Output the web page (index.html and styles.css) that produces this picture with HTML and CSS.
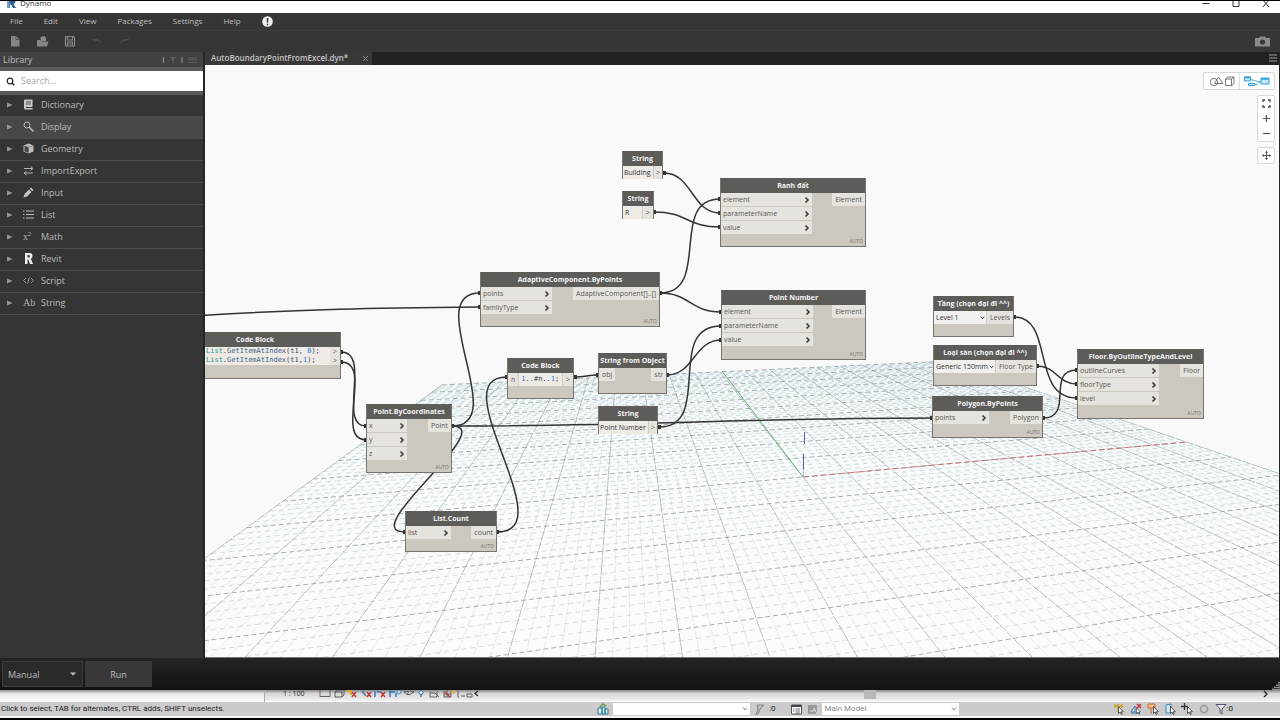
FILE: index.html
```html
<!DOCTYPE html>
<html lang="en">
<head>
<meta charset="utf-8">
<meta name="viewport" content="width=device-width, initial-scale=1">
<title>Dynamo</title>
<link rel="stylesheet" href="styles.css">
</head>
<body>
<svg class="defs" aria-hidden="true">
  <symbol id="chev" viewBox="0 0 6 8"><path d="M1.500 1.500L4 4 1.500 6.500" fill="none" stroke="#3c3b39" stroke-width="1.600"/></symbol>
  <symbol id="tri" viewBox="0 0 6 6"><path d="M0 0.5L5.500 3 0 5.500z" fill="#969696"/></symbol>
  <symbol id="down" viewBox="0 0 6 4"><path d="M1 .5l2 2.500L5 .5" fill="none" stroke="currentColor" stroke-width="1"/></symbol>
  <symbol id="cursor" viewBox="0 0 6 9"><path d="M.5.5v7l1.700-1.500L3.300 8.500l1-.5-1-2.300h2z" fill="#fff" stroke="#333" stroke-width=".8"/></symbol>
</svg>
<div class="app">
  <header class="titlebar">
    <div class="brand">
      <svg width="10" height="9" viewBox="0 0 10 9"><path d="M1 0h5.500q3 0 3 2.500Q9.500 4.300 7.500 5L10 9H7L5 5.500H4V9H1z" fill="#2c5f95"/><path d="M1 0h2.500v9H1z" fill="#6fa3d0"/></svg>
      <span>Dynamo</span>
    </div>
    <div class="winctl">
      <button aria-label="Minimize"><svg width="8" height="8" viewBox="0 0 8 8"><path d="M.5 3.500h7" stroke="#333" fill="none"/></svg></button>
      <button aria-label="Maximize"><svg width="8" height="8" viewBox="0 0 8 8"><path d="M1 0v6.500h6V0" stroke="#333" fill="none"/></svg></button>
      <button aria-label="Close"><svg width="8" height="8" viewBox="0 0 8 8"><path d="M1 7l6-7M7 7L1 0" stroke="#333" fill="none"/></svg></button>
    </div>
  </header>
  <nav class="menu">
    <button>File</button><button>Edit</button><button>View</button><button>Packages</button><button>Settings</button><button>Help</button>
    <button aria-label="Notifications"><svg width="11" height="11" viewBox="0 0 11 11"><circle cx="5.500" cy="5.500" r="5.300" fill="#eee"/><path d="M5.500 2v4.500M5.500 7.700v1.500" stroke="#333" stroke-width="1.500"/></svg></button>
  </nav>
  <div class="toolbar">
    <button aria-label="New"><svg width="12" height="12" viewBox="0 0 12 12"><path d="M2 1h5l3.500 3.500V11.500H2z" fill="#858585"/><path d="M7 1v3.500h3.500" fill="none" stroke="#444" stroke-width=".7"/></svg></button>
    <button aria-label="Open"><svg width="13" height="12" viewBox="0 0 13 12"><path d="M4.500 3V2l4-1 1.500 2v3h-5z" fill="#8a8a8a"/><path d="M1 11.500V5h3.500l1 1.500h7L11 11.500z" fill="#858585"/></svg></button>
    <button aria-label="Save"><svg width="12" height="12" viewBox="0 0 12 12"><path d="M1.500 1.500h8l1 1v8.500h-9zM3.500 1.500v3.500h5V1.500M3.500 11V7h5v4M4.500 9h3" fill="none" stroke="#858585" stroke-width="1.200"/></svg></button>
    <button aria-label="Undo"><svg width="12" height="12" viewBox="0 0 12 12"><path d="M1 4l1-2v2q6-1 9 5-4-4-8-3l1 1z" fill="#4c4c4c"/></svg></button>
    <button aria-label="Redo"><svg width="12" height="12" viewBox="0 0 12 12"><path d="M11 4l-1-2v2q-6-1-9 5 4-4 8-3l-1 1z" fill="#4c4c4c"/></svg></button>
    <button class="camera" aria-label="Export image"><svg width="15" height="11" viewBox="0 0 15 11"><path d="M0 2h4l1-1.500h5L11 2h4v8.500H0z" fill="#8a8a8a"/><circle cx="7.500" cy="6" r="2.600" fill="#383838"/></svg></button>
  </div>

  <main class="main">
    <aside class="library">
      <div class="libhead">
        <h2>Library</h2>
        <svg width="36" height="8" viewBox="0 0 36 8"><path d="M1.500 1v6M20 1v6" stroke="#8a8a8a" stroke-width="1.200"/><path d="M8 1.500h6M11 1.500v6M9.500 3h3" stroke="#666" fill="none"/><path d="M26 2h9M26 4h9M26 6.500h9" stroke="#5c5c5c" fill="none"/></svg>
      </div>
      <label class="search">
        <svg width="9" height="9" viewBox="0 0 9 9"><circle cx="4" cy="4" r="2.800" fill="none" stroke="#222" stroke-width="1.200"/><path d="M6 6l2.300 2.300" stroke="#222" stroke-width="1.500"/></svg>
        <input type="text" placeholder="Search..." aria-label="Search">
      </label>
      <div class="tree">
        <button><svg class="t"><use href="#tri"/></svg><svg class="i" viewBox="0 0 11 11"><path d="M2 .5h7.500V8H3v1h6.500v1.500H2.500Q1 10.500 1 9V1.500Q1 .5 2 .5z" fill="#c8c8c8"/><path d="M3 3h5M3 5h5" stroke="#444" stroke-width=".9"/></svg>Dictionary</button>
        <button class="on"><svg class="t"><use href="#tri"/></svg><svg class="i" viewBox="0 0 11 11"><circle cx="4" cy="4" r="3" fill="none" stroke="#b4b4b4"/><path d="M6 6l4.500 4.500" stroke="#b4b4b4" stroke-width="1.600"/></svg>Display</button>
        <button><svg class="t"><use href="#tri"/></svg><svg class="i" viewBox="0 0 11 11"><path d="M.5 2.500L5.500.5l5 2v6l-5 2-5-2z" fill="#bdbdbd"/><path d="M1.500 3l4 1.200v5.500l-4-1.500z" fill="#444"/><path d="M.5 2.500l5 1.700 5-1.700M5.500 4v6.500" stroke="#666" fill="none" stroke-width=".6"/></svg>Geometry</button>
        <button><svg class="t"><use href="#tri"/></svg><svg class="i" viewBox="0 0 11 11"><path d="M1 3.500h8M7.500 1.500l2.500 2-2.500 2M10 8H2M3.500 6L1 8l2.500 2" fill="none" stroke="#b4b4b4"/></svg>ImportExport</button>
        <button><svg class="t"><use href="#tri"/></svg><svg class="i" viewBox="0 0 11 11"><path d="M.5 10.500l1-3.500 4.500-4.500 2.500 2.500L4 9.500zM6.700 1.800L8 .5 10.500 3 9.200 4.300z" fill="#c4c4c4"/></svg>Input</button>
        <button><svg class="t"><use href="#tri"/></svg><svg class="i" viewBox="0 0 11 11"><path d="M3 2h8M3 5.500h8M3 9h8M0 2h1.500M0 5.500h1.500M0 9h1.500" stroke="#bbb" stroke-width="1.200"/></svg>List</button>
        <button><svg class="t"><use href="#tri"/></svg><span class="i math">x<sup>2</sup></span>Math</button>
        <button><svg class="t"><use href="#tri"/></svg><svg class="i" viewBox="0 0 11 11"><path d="M2 0h4.500Q9.500 0 9.500 3 9.500 5 7.800 5.800L10 11H7L5.300 6.500H4.500V11H2zM4.500 2v2.500h1Q7 4.500 7 3.200 7 2 5.500 2z" fill="#eee" fill-rule="evenodd"/></svg>Revit</button>
        <button><svg class="t"><use href="#tri"/></svg><svg class="i" viewBox="0 0 11 11"><path d="M3 3L.5 5.500 3 8M8 3l2.500 2.500L8 8M6.500 2.500l-2 6" fill="none" stroke="#a4a4a4" stroke-width=".9"/></svg>Script</button>
        <button><svg class="t"><use href="#tri"/></svg><span class="i ab">Ab</span>String</button>
      </div>
    </aside>

    <section class="work">
      <div class="tabs">
        <div class="tab"><span>AutoBoundaryPointFromExcel.dyn*</span><button aria-label="Close tab"><svg width="7" height="7" viewBox="0 0 7 7"><path d="M1 1l5 5M6 1L1 6" stroke="#8c8c8c"/></svg></button></div>
        <button class="tabmenu" aria-label="Tabs"><svg width="8" height="8" viewBox="0 0 8 8"><path d="M0 1h8M0 4h8M0 7h8" stroke="#a0a0a0" stroke-width="1.200"/></svg></button>
      </div>
      <div class="canvas">
        <svg class="layer" width="1075" height="593" viewBox="205 65 1075 593">
          <g id="grid"></g>
          <path d="M803 477L722 371" stroke="#6fae73" fill="none"/>
          <path d="M803 477L1187 442" stroke="#cc7078" stroke-dasharray="6 3" fill="none"/>
          <path d="M804.500 432v12M803.500 454v15" stroke="#5a5fae" fill="none"/><path d="M803.500 469v8" stroke="#b9bce4" fill="none"/>
          <g class="wires">
            <path d="M195 316C300 309 380 308 480 307"/>
            <path d="M660 293C712 293 668 199 720 199"/>
            <path d="M660 293C690 293 690 312 721 312"/>
            <path d="M664 173C692 173 692 213 720 213"/>
            <path d="M654 212C687 212 687 227 720 227"/>
            <path d="M452 426C512 426 420 293 480 293"/>
            <path d="M452 426C500 426 355 532 405 532"/>
            <path d="M452 426C650 426 740 418 932 418"/>
            <path d="M497 532C565 532 440 377 507 377"/>
            <path d="M575 377C583 377 590 375 598 375"/>
            <path d="M667 375C694 375 694 340 721 340"/>
            <path d="M659 427C714 427 664 326 721 326"/>
            <path d="M341 352C372 352 337 426 366 426"/>
            <path d="M341 362C374 362 334 440 366 440"/>
            <path d="M1014 317C1055 317 1030 398 1077 398"/>
            <path d="M1037 366C1057 366 1057 384 1077 384"/>
            <path d="M1043 418C1075 418 1045 370 1077 370"/>
          </g>
          <g id="pins"></g>
        </svg>

        <article class="node n-list"><h3>Code Block</h3>
          <div class="ports"><div class="code"><p><b>List</b>.<i>GetItemAtIndex</i>(t1, <em>0</em>);</p><p><b>List</b>.<i>GetItemAtIndex</i>(t1,<em>1</em>);</p></div><div class="outs slim"><span>&gt;</span><span>&gt;</span></div></div></article>

        <article class="node n-coord"><h3>Point.ByCoordinates</h3>
          <div class="ports"><div class="ins"><span>x<svg><use href="#chev"/></svg></span><span>y<svg><use href="#chev"/></svg></span><span>z<svg><use href="#chev"/></svg></span></div><div class="outs"><span>Point</span></div></div><footer>AUTO</footer></article>

        <article class="node n-count"><h3>List.Count</h3>
          <div class="ports"><div class="ins"><span>list<svg><use href="#chev"/></svg></span></div><div class="outs"><span>count</span></div></div><footer>AUTO</footer></article>

        <article class="node n-adapt"><h3>AdaptiveComponent.ByPoints</h3>
          <div class="ports"><div class="ins"><span>points<svg><use href="#chev"/></svg></span><span>familyType<svg><use href="#chev"/></svg></span></div><div class="outs"><span>AdaptiveComponent[]..[]</span></div></div><footer>AUTO</footer></article>

        <article class="node n-range"><h3>Code Block</h3>
          <div class="ports"><div class="outs"><span>n</span></div><div class="code one"><p><em>1</em>..#n..<em>1</em>;</p></div><div class="outs"><span>&gt;</span></div></div></article>

        <article class="node n-sfo"><h3>String from Object</h3>
          <div class="ports"><div class="outs"><span>obj</span></div><div class="outs"><span>str</span></div></div></article>

        <article class="node n-s3"><h3>String</h3><div class="ports"><input type="text" value="Point Number" aria-label="String value"><div class="outs"><span>&gt;</span></div></div></article>
        <article class="node n-s1"><h3>String</h3><div class="ports"><input type="text" value="Building" aria-label="String value"><div class="outs"><span>&gt;</span></div></div></article>
        <article class="node n-s2"><h3>String</h3><div class="ports"><input type="text" value="R" aria-label="String value"><div class="outs"><span>&gt;</span></div></div></article>

        <article class="node n-ranh"><h3>Ranh đất</h3>
          <div class="ports"><div class="ins"><span>element<svg><use href="#chev"/></svg></span><span>parameterName<svg><use href="#chev"/></svg></span><span>value<svg><use href="#chev"/></svg></span></div><div class="outs"><span>Element</span></div></div><footer>AUTO</footer></article>

        <article class="node n-num"><h3>Point Number</h3>
          <div class="ports"><div class="ins"><span>element<svg><use href="#chev"/></svg></span><span>parameterName<svg><use href="#chev"/></svg></span><span>value<svg><use href="#chev"/></svg></span></div><div class="outs"><span>Element</span></div></div><footer>AUTO</footer></article>

        <article class="node n-level"><h3>Tầng (chọn đại đi ^^)</h3>
          <div class="ports"><div class="pick"><select aria-label="Level"><option>Level 1</option></select><svg><use href="#down"/></svg></div><div class="outs"><span>Levels</span></div></div></article>

        <article class="node n-type"><h3>Loại sàn (chọn đại đi ^^)</h3>
          <div class="ports"><div class="pick"><select aria-label="Floor type"><option>Generic 150mm</option></select><svg><use href="#down"/></svg></div><div class="outs"><span>Floor Type</span></div></div></article>

        <article class="node n-poly"><h3>Polygon.ByPoints</h3>
          <div class="ports"><div class="ins"><span>points<svg><use href="#chev"/></svg></span></div><div class="outs"><span>Polygon</span></div></div><footer>AUTO</footer></article>

        <article class="node n-floor"><h3>Floor.ByOutlineTypeAndLevel</h3>
          <div class="ports"><div class="ins"><span>outlineCurves<svg><use href="#chev"/></svg></span><span>floorType<svg><use href="#chev"/></svg></span><span>level<svg><use href="#chev"/></svg></span></div><div class="outs"><span>Floor</span></div></div><footer>AUTO</footer></article>

        <div class="overlay">
          <div class="views">
            <button aria-label="3D view"><svg width="26" height="12" viewBox="0 0 26 12"><g fill="none" stroke="#555" stroke-width=".8"><circle cx="5" cy="7" r="3.700"/><path d="M5.500 8.500L9.500 2l4.500 6.500z"/><path d="M16.500 4h6v6.500h-6zM16.500 4l2.200-2H25v6.200l-2.500 2.300M22.500 4L25 2"/></g></svg></button>
            <button aria-label="Graph view"><svg width="26" height="12" viewBox="0 0 26 12"><g fill="#c9e6f7" stroke="#2b9fd8"><path d="M7 4.500l10 3M10 9.500h3l4-4" fill="none" stroke-width=".8"/><path d="M.5 2h6v4h-6zM4.500 8.500h6v2h-6zM17 3h8v6h-8z"/><path d="M.5 2.500h6M17 4h8" stroke-width="1.500"/></g></svg></button>
          </div>
          <div class="zoom">
            <button aria-label="Fit"><svg width="9" height="9" viewBox="0 0 9 9"><path d="M1 3V1h2M6 1h2v2M8 6v2H6M3 8H1V6" fill="none" stroke="#444" stroke-width="1.300"/></svg></button>
            <button aria-label="Zoom in"><svg width="9" height="9" viewBox="0 0 9 9"><path d="M1 4.500h7M4.500 1v7" stroke="#555" stroke-width="1.200"/></svg></button>
            <button aria-label="Zoom out"><svg width="9" height="9" viewBox="0 0 9 9"><path d="M1 4.500h7" stroke="#555" stroke-width="1.200"/></svg></button>
          </div>
          <div class="zoom pan">
            <button aria-label="Pan"><svg width="9" height="9" viewBox="0 0 9 9"><path d="M0 4.500h9M4.500 0v9" stroke="#555"/><path d="M3 2l1.500-2L6 2zM3 7l1.500 2L6 7zM2 3L0 4.500 2 6zM7 3l2 1.500L7 6z" fill="#555"/></svg></button>
          </div>
        </div>
      </div>
    </section>
  </main>

  <div class="runbar">
    <div class="mode"><select aria-label="Run mode"><option>Manual</option></select><svg width="6" height="4" viewBox="0 0 6 4"><path d="M0 .5h6L3 3.500z" fill="#c8c8c8"/></svg></div>
    <button class="run">Run</button>
    <svg class="grip" width="8" height="8" viewBox="0 0 8 8"><path d="M7 0v8M5 2.500V8M3 4.500V8M1 6.500V8" stroke="#ddd" stroke-width="1.200" stroke-dasharray="1.500 .7"/></svg>
  </div>

  <div class="strip">
    <div class="blank"></div>
    <div class="viewctl">
      <span>1 : 100</span>
      <svg width="170" height="9" viewBox="0 0 170 9">
        <g fill="none" stroke="#555" stroke-width=".9">
          <path d="M2 0v6.500h10V0M17 2h7v5h-7zM17 2l2-2h7v5l-2 2"/>
          <path d="M86 2q5 6 10-1M86 1.500h4M92 .5l4 2M89 5l2-4M112 1v6h7V1M113 3h4l4 4M141 7h-1V1M143 6h4M149 4h5v3h-5z"/>
          <path d="M126 1v6h7V1M126 4h7M129 0v7"/>
        </g>
        <path d="M44 1l4 5M57 1v6M59 2h4M71 2h6M72 0v7M78 3v4" stroke="#3b78b8" stroke-width="1.500"/>
        <path d="M29 1h4v4" stroke="#d9a92c" stroke-width="2" fill="none"/>
        <path d="M34 2l4 5M38 2l-4 5M49 2l4 5M53 2l-4 5M63 2l4 5M67 2l-4 5M127 2l5 5" stroke="#c03434" stroke-width="1.400"/>
        <circle cx="103" cy="2.500" r="2" fill="#dbeaf7" stroke="#3b78b8"/><path d="M103 4v3" stroke="#3b78b8" stroke-width="1.500"/>
        <circle cx="81" cy="2" r="2" fill="#bcd4ee" stroke="#3b78b8" stroke-width=".8"/><circle cx="135" cy="2" r="1.800" fill="#e3b43e"/>
        <path d="M160 1l-3 2.500L160 6" stroke="#222" stroke-width="1.200" fill="none"/>
      </svg>
      <div class="thumb"></div>
      <svg class="rt" width="6" height="8" viewBox="0 0 6 8"><path d="M1 1l3 3-3 3" stroke="#222" stroke-width="1.300" fill="none"/></svg>
    </div>
  </div>

  <footer class="status">
    <span class="hint">Click to select, TAB for alternates, CTRL adds, SHIFT unselects.</span>
    <div class="mid">
      <svg width="12" height="12" viewBox="0 0 12 12"><path d="M1 5h4v6H1zM5 4h3v7H5zM8 6h3v5H8z" fill="#dff0f4" stroke="#2a7898"/><path d="M3 4l3-3 3 2" stroke="#6a9a3b" stroke-width="1.500" fill="none"/></svg>
      <div class="combo ws"><select aria-label="Workset"><option></option></select><svg><use href="#down"/></svg></div>
      <svg class="edit" width="11" height="11" viewBox="0 0 11 11"><path d="M3 1h7L6 5 4 10H2l2-5z" fill="#bbb" stroke="#888"/></svg>
      <span>:0</span>
      <svg class="opts" width="11" height="11" viewBox="0 0 11 11"><path d="M.5 1h10v9H.5z" fill="#fff" stroke="#555"/><path d="M.5 2h10" stroke="#445" stroke-width="2"/><path d="M2 5h1.500M4.500 5H9M4.500 7H9M2 7h1.500M4.500 9H9" stroke="#445" stroke-width=".8"/></svg>
      <svg width="12" height="11" viewBox="0 0 12 11"><path d="M2 1h9v9H2z" fill="#999"/><path d="M4 7h4V4l3 6" stroke="#ddd" fill="none"/></svg>
      <div class="combo"><select aria-label="Design option"><option>Main Model</option></select><svg><use href="#down"/></svg></div>
    </div>
    <div class="sel">
      <svg viewBox="0 0 12 12"><path d="M1 3h9M2 1v4M5 1v4M9 1v4M5 5v4" stroke="#c8a42c" stroke-width="1.600"/><use href="#cursor" x="5" y="3" width="6" height="9"/></svg>
      <svg viewBox="0 0 12 12"><path d="M1 9l4-6v6zM1 10h9" stroke="#3b78a8" fill="#e4eef4"/><path d="M7 1l4 4M11 1L7 5" stroke="#c43b3b" stroke-width="1.500"/><use href="#cursor" x="6" y="4" width="5" height="8"/></svg>
      <svg viewBox="0 0 12 12"><path d="M1 1h7v4H1zM4 5v6" fill="#f4c08a" stroke="#c06a2a"/><use href="#cursor" x="6" y="3" width="6" height="9"/></svg>
      <svg viewBox="0 0 12 12"><path d="M2 2l5-1v9H2z" fill="#cfe6f4" stroke="#3b88b8"/><use href="#cursor" x="6" y="3" width="6" height="9"/></svg>
      <svg viewBox="0 0 12 12"><path d="M0 3.500h7M3.500 0v7" stroke="#333" stroke-width="1.300"/><use href="#cursor" x="6" y="3" width="6" height="9"/></svg>
      <svg viewBox="0 0 12 12"><circle cx="6" cy="6" r="3.500" fill="none" stroke="#999" stroke-width="1.600"/></svg>
      <svg viewBox="0 0 12 12"><path d="M1 1.500h10L7 6v5l-2-1.500V6z" fill="#dde6ee" stroke="#556"/></svg>
      <span>:0</span>
    </div>
  </footer>
</div>
<script src="grid.js"></script>
</body>
</html>
```
FILE: styles.css
```css
* { box-sizing: border-box; }
html, body { margin: 0; height: 100%; }
body { font-family: "Open Sans", "Noto Sans", sans-serif; font-size: 9px; background: #000; overflow: hidden; }
button, input, select { font: inherit; color: inherit; background: none; border: 0; padding: 0; margin: 0; border-radius: 0; outline: 0; }
select { appearance: none; }
svg { display: block; flex: none; }
h2, h3, p { margin: 0; font-weight: 400; }
.defs { position: absolute; width: 0; height: 0; }
.app { height: 100vh; display: flex; flex-direction: column; border-top: 1px solid #000; border-bottom: 2px solid #000; background: #353535; }

.titlebar { height: 12px; background: #fff; display: flex; justify-content: space-between; overflow: hidden; flex: none; }
.brand { display: flex; gap: 4px; padding-left: 6px; align-items: flex-start; height: 8px; font-size: 8px; line-height: 4px; color: #333; }
.brand svg { margin-top: -2px; }
.winctl { display: flex; gap: 22px; padding-right: 10px; }
.winctl button { height: 8px; }
.winctl svg { margin-top: -2px; }

.menu { height: 17px; background: #363636; display: flex; align-items: center; gap: 21px; padding: 0 0 1px 10px; font-size: 8px; line-height: 12px; color: #bdbdbd; flex: none; }
.toolbar { height: 22px; background: #363636; border-top: 1px solid #3c3c3c; display: flex; align-items: center; gap: 15px; padding: 0 10px 1px 9px; flex: none; }
.camera { margin-left: auto; }

.main { flex: 1; min-height: 0; display: flex; }
.library { width: 205px; flex: none; background: #353535; border-right: 2px solid #262626; color: #bcbcbc; }
.libhead { height: 15px; background: #424242; display: flex; align-items: center; justify-content: space-between; padding: 0 5px 0 3px; }
.libhead h2 { font-size: 9px; line-height: 14px; }
.search { display: flex; align-items: center; gap: 6px; height: 28px; padding-left: 6px; background: #fff; border: solid #5a5a5a; border-width: 4px 0; }
.search input { flex: 1; min-width: 0; font-size: 9px; line-height: 14px; color: #333; }
.search input::placeholder { color: #a3a3a3; opacity: 1; }
.tree button { display: flex; align-items: center; width: 100%; height: 22px; padding: 0 0 2px 7px; border-bottom: 1px solid #4a4a4a; line-height: 14px; text-align: left; }
.tree .on { background: #484848; }
.t { width: 6px; height: 6px; margin-right: 10px; }
.i { width: 11px; height: 11px; margin-right: 7px; }
.math, .ab { font-family: "Liberation Serif", serif; font-size: 10px; line-height: 12px; height: 12px; color: #b4b4b4; white-space: nowrap; }
.math sup { font-size: 6px; line-height: 0; }

.work { flex: 1; min-width: 0; display: flex; flex-direction: column; border-right: 1px solid #262626; }
.tabs { height: 13px; background: #222; display: flex; justify-content: space-between; flex: none; }
.tab { display: flex; align-items: center; gap: 14px; padding: 0 3px 1px 6px; background: #383838; color: #c4c4c4; font-size: 8px; font-weight: 600; line-height: 12px; }
.tabmenu { padding: 0 2px 1px 0; }
.canvas { flex: 1; min-height: 0; position: relative; overflow: hidden; background: #f9f9f9; border-bottom: 1px solid #777; }
.layer { position: absolute; left: 0; top: 0; }
.wires path { fill: none; stroke: #333; stroke-width: 1.5; }

.node { position: absolute; background: #cdc8bf; border: 1px solid #77756f; border-top-color: #5e5c59; color: #5a5855; font-size: 7px; line-height: 14px; height: 41px; display: flex; flex-direction: column; }
.node h3 { height: 14px; line-height: 13px; background: #5e5c59; color: #f4f4f4; font-size: 7px; font-weight: 700; text-align: center; white-space: nowrap; flex: none; }
.ports { display: flex; justify-content: space-between; align-items: flex-start; }
.ins { display: grid; gap: 1px; }
.ins span, .outs span { display: flex; align-items: center; justify-content: space-between; background: #e6e2dd; height: 13px; line-height: 13px; padding: 0 2px; white-space: nowrap; }
.outs span { padding: 0 3px; }
.ins svg { width: 6px; height: 8px; }
.node footer { margin-top: auto; text-align: right; font-size: 5px; line-height: 10px; padding-right: 2px; color: #77746f; }
.node input { flex: 1; min-width: 0; height: 13px; padding-left: 2px; font-size: 7px; color: #333; background: #eeebe7; border-right: 1px solid #d0ccc5; }
.code { flex: 1; background: #eeebe7; font-family: "DejaVu Sans Mono", monospace; font-size: 7px; line-height: 9px; color: #444; white-space: pre; padding-left: 36px; }
.code b, .code i, .code em { font-weight: 400; font-style: normal; }
.code b { color: #2f8f8a; }
.code i { color: #3d6480; }
.code em { color: #2f78d8; }
.code.one { line-height: 13px; padding-left: 2px; border: solid #d0ccc5; border-width: 0 1px; }
.slim span { height: 9px; line-height: 9px; }
.pick { flex: 1; display: grid; align-items: center; background: #f1f0ee; border-right: 1px solid #d0ccc5; height: 13px; color: #333; }
.pick select { grid-area: 1 / 1; width: 100%; padding-left: 2px; line-height: 12px; }
.pick svg { grid-area: 1 / 1; justify-self: end; width: 5px; height: 4px; margin-right: 1px; pointer-events: none; }

.n-list { left: -36px; top: 267px; width: 172px; height: 47px; }
.n-coord { left: 161px; top: 339px; width: 86px; height: 69px; }
.n-coord .ins { width: 40px; }
.n-count { left: 200px; top: 446px; width: 92px; }
.n-count .ins { width: 45px; }
.n-adapt { left: 275px; top: 207px; width: 180px; height: 55px; }
.n-adapt .ins { width: 71px; }
.n-range { left: 302px; top: 293px; width: 67px; }
.n-sfo { left: 393px; top: 288px; width: 69px; }
.n-s3 { left: 393px; top: 341px; width: 60px; height: 28px; }
.n-s1 { left: 417px; top: 86px; width: 41px; height: 28px; }
.n-s2 { left: 417px; top: 126px; width: 32px; height: 28px; }
.n-s1 span, .n-s3 span { padding: 0 2px; }
.n-s1 input, .n-s3 input { padding-left: 1px; }
.n-ranh { left: 515px; top: 113px; width: 146px; height: 69px; }
.n-num { left: 516px; top: 225px; width: 145px; height: 70px; }
.n-ranh .ins, .n-num .ins { width: 91px; }
.n-level { left: 728px; top: 231px; width: 81px; }
.n-type { left: 728px; top: 280px; width: 104px; }
.n-poly { left: 727px; top: 331px; width: 111px; height: 42px; }
.n-poly .ins { width: 56px; }
.n-floor { left: 872px; top: 284px; width: 127px; height: 70px; }
.n-floor .ins { width: 81px; }

.overlay { position: absolute; top: 7px; right: 4px; display: flex; flex-direction: column; align-items: flex-end; gap: 5px; }
.views, .zoom { display: flex; background: #fff; border: 1px solid #d8d8d8; border-radius: 2px; }
.views button { width: 35px; height: 16px; display: grid; place-items: center; }
.views button + button { border-left: 1px solid #e0e0e0; }
.zoom { flex-direction: column; }
.zoom button { width: 16px; height: 15px; display: grid; place-items: center; }

.runbar { height: 32px; flex: none; display: flex; align-items: center; gap: 2px; padding-left: 2px; background: linear-gradient(#242424, #121212); color: #bcbcbc; font-size: 9px; }
.mode { display: grid; align-items: center; width: 81px; height: 26px; background: #2a2a2a; border: 1px solid #3c3c3c; }
.mode select { grid-area: 1 / 1; padding-left: 5px; }
.mode svg { grid-area: 1 / 1; justify-self: end; margin-right: 6px; pointer-events: none; }
.run { width: 67px; height: 26px; background: #383838; }
.grip { margin-left: auto; align-self: flex-end; }

.strip { height: 12px; flex: none; display: flex; background: linear-gradient(#8a8a8a, #d8d8d8 30%, #ebebeb 80%, #fff); font-family: "Open Sans", sans-serif; font-size: 7px; line-height: 8px; color: #222; }
.blank { width: 265px; border-right: 1px solid #aaa; background: linear-gradient(#8a8a8a, #e8e8e8 30%, #fff); }
.viewctl { flex: 1; display: flex; align-items: flex-start; padding: 0 11px 0 18px; gap: 11px; }
.viewctl span { white-space: nowrap; width: 24px; }
.thumb { width: 12px; height: 9px; background: #b8b8b8; margin-left: 365px; }
.rt { margin-left: auto; }

.status { height: 16px; flex: none; display: flex; align-items: center; background: #cbcbcb; border-bottom: 2px solid #f4f4f4; font-family: Roboto, sans-serif; font-size: 8px; line-height: 12px; color: #222; padding-left: 1px; }
.hint { flex: none; width: 596px; }
.mid { display: flex; align-items: center; gap: 4px; }
.combo { display: grid; align-items: center; width: 137px; height: 12px; background: #fff; color: #888; }
.combo select { grid-area: 1 / 1; width: 100%; padding-left: 2px; font-size: 8px; line-height: 12px; }
.combo svg { grid-area: 1 / 1; justify-self: end; width: 6px; height: 4px; margin-right: 2px; pointer-events: none; }
.opts { margin-left: 12px; }
.sel { margin-left: auto; display: flex; align-items: center; gap: 5px; padding-right: 47px; }
.sel svg { width: 12px; height: 12px; }
.sel span { margin-left: -5px; }
```
FILE: grid.js
```js
// Ground plane of the 3D preview: u and v run from -1 to 1, projected in perspective.
const A = 0.184, B = 0.87;
const ORIGIN = [803, 477], VU = [3270, 252], VV = [625, 251];
const NEAR = 0.3;

function project(u, v) {
  const w = 1 + A * u + B * v;
  return [0, 1].map(i => ((ORIGIN[i] + A * u * VU[i] + B * v * VV[i]) / w).toFixed(1)).join(' ');
}

function lines(step, skip) {
  const n = Math.round(1 / step);
  let along = '', across = '';
  for (let k = -n; k <= n; k++) {
    if (skip && k % skip === 0) continue;
    const c = k * step;
    const v0 = Math.max(-1, (NEAR - 1 - A * c) / B);
    across += `M${project(c, 1)}L${project(c, v0)}`;
    const u0 = Math.max(-1, (NEAR - 1 - B * c) / A);
    if (u0 < 1) along += `M${project(u0, c)}L${project(1, c)}`;
  }
  return [across, along];
}

const [minorV, minorU] = lines(0.02, 5);
const [majorV, majorU] = lines(0.1, 0);
const outline = `M${project(-1, 1)}L${project(1, 1)}L${project(1, -0.9)}L${project(-1, -0.57)}z`;
document.getElementById('grid').innerHTML =
  `<path d="${outline}" fill="#fafcfc"/>` +
  `<g fill="none"><path d="${minorV}" stroke="#cfdade" stroke-width=".6" stroke-dasharray="7 2"/>` +
  `<path d="${minorU}" stroke="#b4cbd4" stroke-width=".6" stroke-dasharray="5 4"/>` +
  `<path d="${majorV}" stroke="#9aa5aa" stroke-width=".7" stroke-dasharray="9 1"/>` +
  `<path d="${majorU}" stroke="#8f9ca2" stroke-width=".8" stroke-dasharray="5 3"/></g>`;

// A square pin at both ends of each wire.
document.getElementById('pins').innerHTML = [...document.querySelectorAll('.wires path')].map(p => {
  const a = p.getPointAtLength(0), b = p.getPointAtLength(p.getTotalLength());
  return [a, b].map(q => `<rect x="${q.x - 2}" y="${q.y - 2}" width="4" height="4" fill="#333"/>`).join('');
}).join('');
```
